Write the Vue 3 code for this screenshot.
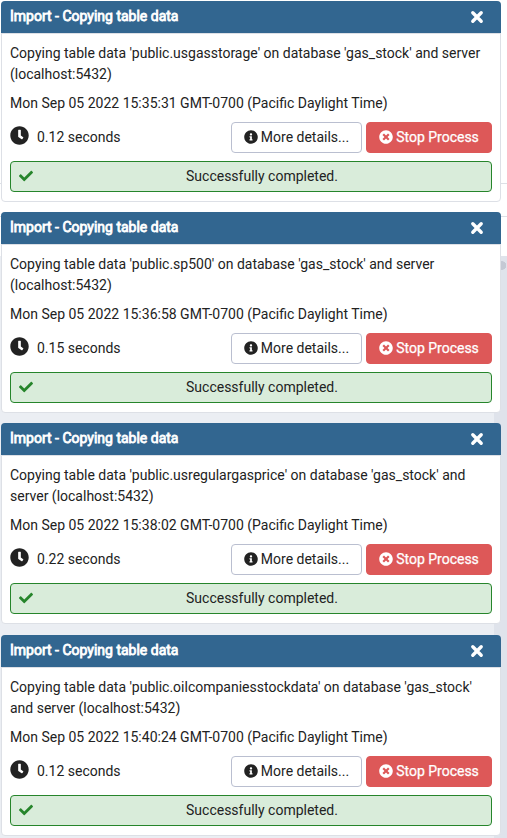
<script setup>
const notices = [
  { table: 'usgasstorage', time: '15:35:31', seconds: '0.12' },
  { table: 'sp500', time: '15:36:58', seconds: '0.15' },
  { table: 'usregulargasprice', time: '15:38:02', seconds: '0.22' },
  { table: 'oilcompaniesstockdata', time: '15:40:24', seconds: '0.12' },
]
</script>

<template>
  <main class="page">
    <section v-for="n in notices" :key="n.table" class="card">
      <header class="head">
        <span class="title">Import - Copying table data</span>
        <svg class="close" viewBox="0 0 12 12"><path d="M2.4 2.4 9.6 9.6M9.6 2.4 2.4 9.6" /></svg>
      </header>
      <div class="body">
        <p class="desc">Copying table data 'public.{{ n.table }}' on database 'gas_stock' and server (localhost:5432)</p>
        <p class="date">Mon Sep 05 2022 {{ n.time }} GMT-0700 (Pacific Daylight Time)</p>
        <div class="row">
          <svg class="clock" viewBox="0 0 512 512"><path d="M256 8C119 8 8 119 8 256s111 248 248 248 248-111 248-248S393 8 256 8zm57.100 350.100L224.900 294c-3.100-2.300-4.900-5.900-4.900-9.700V116c0-6.600 5.400-12 12-12h48c6.600 0 12 5.400 12 12v137.700l63.500 46.200c5.400 3.900 6.500 11.400 2.600 16.800l-28.200 38.800c-3.900 5.300-11.400 6.500-16.800 2.600z" /></svg>
          <span class="seconds">{{ n.seconds }} seconds</span>
          <button class="btn details">
            <svg viewBox="0 0 512 512"><path d="M256 8C119.043 8 8 119.083 8 256c0 136.997 111.043 248 248 248s248-111.003 248-248C504 119.083 392.957 8 256 8zm0 110c23.196 0 42 18.804 42 42s-18.804 42-42 42-42-18.804-42-42 18.804-42 42-42zm56 254c0 6.627-5.373 12-12 12h-88c-6.627 0-12-5.373-12-12v-24c0-6.627 5.373-12 12-12h12v-64h-12c-6.627 0-12-5.373-12-12v-24c0-6.627 5.373-12 12-12h64c6.627 0 12 5.373 12 12v100h12c6.627 0 12 5.373 12 12v24z" /></svg>
            <span>More details...</span>
          </button>
          <button class="btn stop">
            <svg viewBox="0 0 512 512"><path d="M256 8C119 8 8 119 8 256s111 248 248 248 248-111 248-248S393 8 256 8zm121.600 313.100c4.700 4.700 4.700 12.300 0 17L338 377.600c-4.700 4.700-12.300 4.700-17 0L256 312l-65.100 65.600c-4.700 4.700-12.300 4.700-17 0L134.400 338c-4.700-4.700-4.700-12.300 0-17l65.600-65-65.600-65.100c-4.700-4.700-4.700-12.300 0-17l39.600-39.600c4.700-4.700 12.300-4.700 17 0l65 65.700 65.100-65.600c4.700-4.700 12.300-4.700 17 0l39.600 39.600c4.700 4.700 4.700 12.300 0 17L312 256l65.600 65.100z" /></svg>
            <span>Stop Process</span>
          </button>
        </div>
        <div class="status">
          <svg viewBox="0 0 512 512"><path d="M173.898 439.404l-166.400-166.400c-9.997-9.997-9.997-26.206 0-36.204l36.203-36.204c9.997-9.998 26.207-9.998 36.204 0L192 312.690 432.095 72.596c9.997-9.997 26.207-9.997 36.204 0l36.203 36.204c9.997 9.997 9.997 26.206 0 36.204l-294.400 294.401c-9.998 9.997-26.207 9.997-36.204-.001z" /></svg>
          <span>Successfully completed.</span>
        </div>
      </div>
    </section>
  </main>
</template>

<style>
body { background: #fff; overflow: hidden; }
</style>

<style scoped>
.page {
  box-sizing: border-box;
  width: 507px;
  height: 838px;
  padding: 1px 6px 0 1px;
  display: flex;
  flex-direction: column;
  gap: 10px;
  overflow: hidden;
  font-family: Roboto, "Liberation Sans", sans-serif;
  font-size: 14px;
  line-height: 21px;
  color: #222;
  background:
    radial-gradient(circle at 2px 4.5px, #c4c9d4 4px, transparent 4.5px) 500px 261px / 7px 9px no-repeat,
    linear-gradient(#dde0e6, #dde0e6) 0 183px / 507px 1px no-repeat,
    linear-gradient(#dde0e6, #dde0e6) 0 216px / 507px 1px no-repeat,
    linear-gradient(#dfe3eb, #dfe3eb) 494px 256px / 13px 582px no-repeat,
    linear-gradient(#ebeef3, #ebeef3) 0 256px / 494px 582px no-repeat,
    #fff;
}
.card {
  box-sizing: border-box;
  flex: none;
  width: 500px;
  height: 201px;
  border: 1px solid #dde0e6;
  border-radius: 4px;
  background: #fff;
}
.card:last-child { margin-top: 1px; }
.head {
  box-sizing: border-box;
  height: 32px;
  margin: -1px -1px 0;
  padding: 0 17px 0 9px;
  display: flex;
  align-items: center;
  justify-content: space-between;
  border-radius: 4px 4px 0 0;
  background: #326690;
  color: #fff;
}
.title { font-weight: 400; -webkit-text-stroke: 0.8px #fff; margin-bottom: 1px; }
.close { width: 14px; height: 14px; fill: none; stroke: #fff; stroke-width: 2.9; stroke-linecap: round; }
.body {
  padding: 9px 8px 0;
  border-top: 1px solid #dde0e6;
}
p { margin: 0; }
.desc { height: 42px; }
.date { margin-top: 8px; }
.row { display: flex; align-items: center; margin-top: 8px; height: 31px; }
.clock { width: 19px; height: 19px; fill: #222; margin-bottom: 4px; }
.seconds { margin-left: 8px; flex: 1; }
.btn {
  box-sizing: border-box;
  height: 31px;
  padding: 0;
  display: flex;
  align-items: center;
  justify-content: center;
  gap: 3px;
  border: 1px solid #babfd0;
  border-radius: 4px;
  background: #fff;
  color: #222;
  font: inherit;
}
.btn svg { width: 14px; height: 14px; fill: currentColor; margin-bottom: 1px; }
.details { width: 131px; }
.stop {
  width: 126px;
  margin-left: 4px;
  border-color: #dd5858;
  background: #dd5858;
  color: #fff;
}
.stop span { -webkit-text-stroke: 0.25px #fff; }
.status {
  box-sizing: border-box;
  height: 31px;
  margin-top: 8px;
  padding: 0 0 0 8px;
  display: flex;
  align-items: center;
  border: 1px solid #26852b;
  border-radius: 4px;
  background: #d9ecda;
}
.status svg { width: 14px; height: 14px; fill: #26852b; margin-bottom: 2px; }
.status span { flex: 1; text-align: center; }
</style>
